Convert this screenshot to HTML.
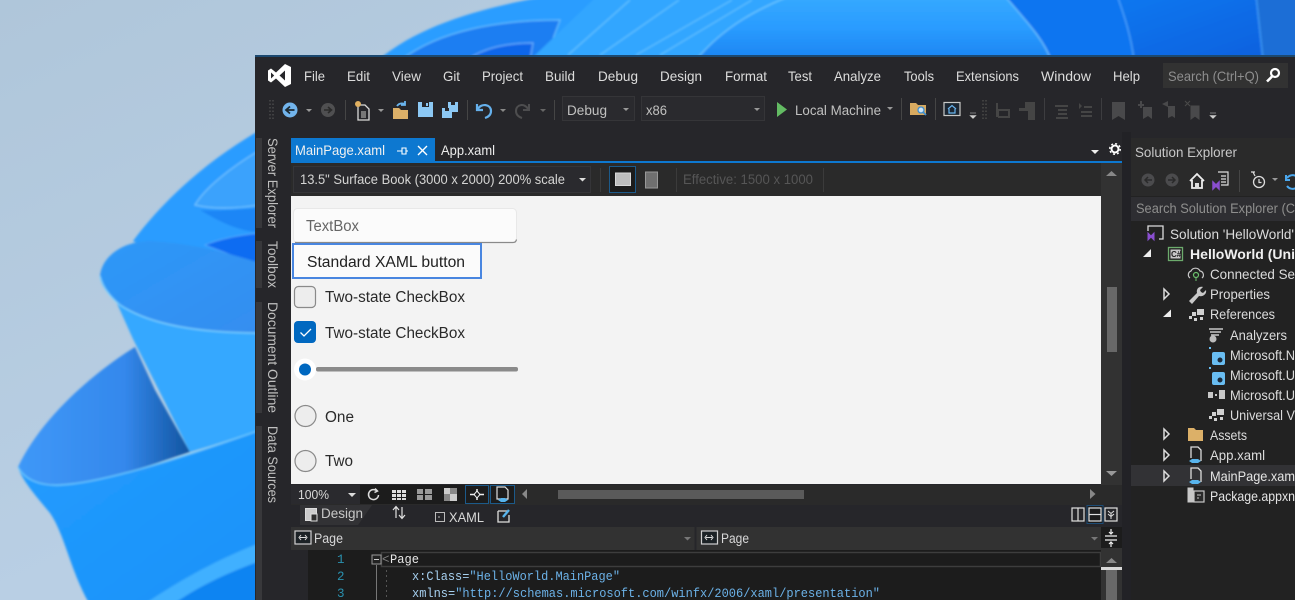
<!DOCTYPE html>
<html><head><meta charset="utf-8"><title>Visual Studio XAML Designer</title>
<style>
html,body{margin:0;padding:0;background:#b8cde0;width:1295px;height:600px;overflow:hidden}
svg{display:block}
text{font-family:"Liberation Sans",sans-serif;font-size:14px;fill:#e4e4e4;white-space:pre}
.m{fill:#dcdcdc}
.d{fill:#202020;font-size:15.5px}
.c{font-family:"Liberation Mono",monospace;font-size:12.5px;fill:#d8d8d8}
.n{fill:#2b91af}
.v{fill:#c0c0c0;font-size:13.5px}
</style></head><body>
<svg width="1295" height="600" viewBox="0 0 1295 600" xmlns="http://www.w3.org/2000/svg">
<defs>
<linearGradient id="bg" x1="0" y1="0" x2="1" y2="1"><stop offset="0" stop-color="#afc6da"/><stop offset=".5" stop-color="#b9cfe4"/><stop offset="1" stop-color="#bccfe6"/></linearGradient>
<linearGradient id="back" x1="0" y1="0" x2="1" y2="0"><stop offset="0" stop-color="#3f98f8"/><stop offset=".62" stop-color="#3488ec"/><stop offset=".85" stop-color="#1f68bd"/><stop offset="1" stop-color="#13549f"/></linearGradient>
<linearGradient id="front" x1="0" y1="0" x2="1" y2="1"><stop offset="0" stop-color="#229cff"/><stop offset="1" stop-color="#1c92f8"/></linearGradient>
<linearGradient id="dome" x1="0" y1="0" x2="0" y2="1"><stop offset="0" stop-color="#36aaff"/><stop offset=".5" stop-color="#2a9cff"/><stop offset="1" stop-color="#1b84f2"/></linearGradient>
<linearGradient id="dk" x1="0" y1="0" x2="1" y2="1"><stop offset="0" stop-color="#0e78f0"/><stop offset="1" stop-color="#0a5edc"/></linearGradient>
<linearGradient id="pt" x1="0" y1="0" x2="1" y2="1"><stop offset="0" stop-color="#2c98f8"/><stop offset="1" stop-color="#358ef0"/></linearGradient>
<clipPath id="se"><rect x="1131" y="138" width="164" height="462"/></clipPath>
<filter id="b1" x="-5%" y="-5%" width="110%" height="110%"><feGaussianBlur stdDeviation="1"/></filter>
<filter id="b2" x="0" y="0" width="100%" height="100%"><feGaussianBlur stdDeviation="0.35"/></filter>
</defs>

<!-- wallpaper -->
<rect width="1295" height="600" fill="url(#bg)"/>
<g filter="url(#b1)">
<path d="M378 60C420 25 480 8 553 -5H1300V60Z" fill="#2a9dff"/>
<path d="M401 60C440 30 500 20 560 20L545 60Z" fill="#1a7ef2" stroke="#6cc4ff" stroke-width="1"/>
<path d="M467 60C485 47 510 43 533 43L530 60Z" fill="#0e66ea" stroke="#70b8ff" stroke-width="1"/>
<path d="M530 60L598 -5H1300V60Z" fill="#33a6ff"/>
<g fill="none" stroke="#6cc8ff" stroke-width="1"><path d="M568 55L630 0M600 55L679 0M636 55L732 0M660 55L752 0"/></g>
<path d="M1004 -5H1300V60H1051Z" fill="#0e74f0"/>
<path d="M1117 -5C1125 18 1131 36 1134 60H1300V-5Z" fill="url(#dk)" stroke="#55b0ff" stroke-width="1"/>
<path d="M1256 -5L1263 60H1300V-5Z" fill="#1a6ed6" stroke="#4aa8ff" stroke-width="1"/>
<path d="M696 60C725 25 760 8 792 -5H1004C1025 20 1043 38 1051 60Z" fill="url(#dome)" stroke="#7ad0ff" stroke-width="1"/>

<path d="M260 130C200 165 160 205 133 241L260 300Z" fill="#2a9cff"/>
<path d="M260 150C230 168 205 188 195 205C215 210 240 208 260 205Z" fill="#3aa2fc" stroke="#7ccaff" stroke-width="1"/>
<path d="M200 210C220 222 240 232 260 232V208C235 210 215 211 200 210Z" fill="#1f86f6"/>
<path d="M205 245C222 238 240 235 260 233V266Z" fill="#0b6cf2" stroke="#66b8ff" stroke-width=".6"/>
<path d="M135 347C90 375 40 420 18 467C25 480 40 485 60 485C105 483 150 465 190 452L155 390Z" fill="url(#back)"/>
<path d="M115 299L133 339L190 452C215 445 235 438 260 430V333C200 333 150 320 115 299Z" fill="#34a8ff"/>
<path d="M100 276C102 255 125 241 150 241C190 243 225 252 260 263V333C200 333 150 325 120 305C108 295 100 285 100 276Z" fill="url(#pt)"/>
<path d="M100 276C102 285 108 295 120 305C150 325 200 333 260 333" fill="none" stroke="#7fd4ff" stroke-width="1.300"/>
<path d="M18 467C25 480 40 486 60 485C105 483 190 455 260 430V605H90C70 570 65 535 50 513C35 495 22 480 18 467Z" fill="url(#front)"/>
<path d="M18 467C25 480 40 486 60 485C105 483 190 455 260 430" fill="none" stroke="#6fceff" stroke-width="1.200"/>
<path d="M143 605C180 580 220 558 260 543V605Z" fill="#3fb0ff"/>
<path d="M172 605C200 585 230 572 260 561V605Z" fill="#0d84f2"/>
</g>

<g filter="url(#b2)">
<!-- window -->
<rect x="255" y="55" width="1040" height="545" fill="#28282a"/>
<rect x="255" y="55" width="1040" height="2" fill="#1c4a70"/>

<!-- logo -->
<path fill-rule="evenodd" fill="#fff" d="M285 64L291 67V84L285 87L276 78.500L271 82.500L268 80.500V70.500L271 68.500L276 72.500ZM271 72.500V78.500L274.200 75.500ZM285 70.500L279.500 75.500L285 80.500Z"/>

<!-- menu -->
<text class="m" x="304" y="81" textLength="21" lengthAdjust="spacingAndGlyphs">File</text>
<text class="m" x="347" y="81" textLength="23" lengthAdjust="spacingAndGlyphs">Edit</text>
<text class="m" x="392" y="81" textLength="29" lengthAdjust="spacingAndGlyphs">View</text>
<text class="m" x="443" y="81" textLength="17" lengthAdjust="spacingAndGlyphs">Git</text>
<text class="m" x="482" y="81" textLength="41" lengthAdjust="spacingAndGlyphs">Project</text>
<text class="m" x="545" y="81" textLength="30" lengthAdjust="spacingAndGlyphs">Build</text>
<text class="m" x="598" y="81" textLength="40" lengthAdjust="spacingAndGlyphs">Debug</text>
<text class="m" x="660" y="81" textLength="42" lengthAdjust="spacingAndGlyphs">Design</text>
<text class="m" x="725" y="81" textLength="42" lengthAdjust="spacingAndGlyphs">Format</text>
<text class="m" x="788" y="81" textLength="24" lengthAdjust="spacingAndGlyphs">Test</text>
<text class="m" x="834" y="81" textLength="47" lengthAdjust="spacingAndGlyphs">Analyze</text>
<text class="m" x="904" y="81" textLength="30" lengthAdjust="spacingAndGlyphs">Tools</text>
<text class="m" x="956" y="81" textLength="63" lengthAdjust="spacingAndGlyphs">Extensions</text>
<text class="m" x="1041" y="81" textLength="50" lengthAdjust="spacingAndGlyphs">Window</text>
<text class="m" x="1113" y="81" textLength="27" lengthAdjust="spacingAndGlyphs">Help</text>
<rect x="1163" y="63" width="125" height="25" fill="#303031"/>
<text x="1168" y="81" textLength="91" lengthAdjust="spacingAndGlyphs" style="fill:#8e8e8e">Search (Ctrl+Q)</text>
<circle cx="1275" cy="73" r="4" fill="none" stroke="#fff" stroke-width="2.200"/><path d="M1272 76.500L1267 81.500" stroke="#fff" stroke-width="2.600"/>

<!-- toolbar -->
<path d="M270 100v20M273 100v20" stroke="#4a4a4a" stroke-width="1.500" stroke-dasharray="1.500 2"/>
<circle cx="290" cy="110" r="7.500" fill="#72b4ec"/><path d="M294.500 110H287M290 106.500L286 110L290 113.500" fill="none" stroke="#1f2a33" stroke-width="1.800"/>
<path d="M306 109h6l-3 3z" fill="#999"/>
<circle cx="328" cy="110" r="7" fill="#505051"/><path d="M324 110h7M328 107l3.500 3l-3.500 3" fill="none" stroke="#2a2a2b" stroke-width="1.600"/>
<path d="M345.500 100v20" stroke="#444"/>
<path d="M358 105h7l4 4v11h-11z" fill="none" stroke="#d8d8d8" stroke-width="1.300"/><circle cx="358" cy="104" r="3" fill="#e0b060"/><path d="M361 111h5v7h-5z" fill="#777"/>
<path d="M378 109h6l-3 3z" fill="#999"/>
<path d="M393 108h6l2 2h7v9h-15z" fill="#dcb067"/><path d="M397 106c2-3 5-3 8-2M405 101v4h-4" fill="none" stroke="#6ab4ee" stroke-width="1.800"/>
<path d="M418 102h15v15h-15z" fill="#8cc8f4"/><path d="M422 102h7v5h-7z" fill="#28282a"/><rect x="426" y="103" width="2" height="3" fill="#8cc8f4"/>
<path d="M442 108h10v10h-10z" fill="#8cc8f4"/><path d="M448 102h10v10h-6v-4h-4z" fill="#8cc8f4"/><path d="M445 108h4v3h-4zM451 102h4v3h-4z" fill="#28282a"/>
<path d="M467.500 100v20" stroke="#444"/>
<path d="M477 104v6h6M478 109c3-6 13-5 13 2c0 4-3 6-6 7" fill="none" stroke="#65b0ec" stroke-width="2.200"/>
<path d="M500 109h6l-3 3z" fill="#888"/>
<path d="M529 104v6h-6M528 109c-3-6-12-5-12 2c0 4 3 6 6 7" fill="none" stroke="#4e4e4f" stroke-width="2"/>
<path d="M540 109h6l-3 3z" fill="#666"/>
<path d="M554.500 100v20" stroke="#444"/>
<rect x="562.500" y="96.500" width="72" height="24" fill="#2c2c2d" stroke="#363637"/>
<text class="v" x="567" y="115" textLength="40" lengthAdjust="spacingAndGlyphs">Debug</text>
<path d="M623 108h6l-3 3z" fill="#999"/>
<rect x="641.500" y="96.500" width="123" height="24" fill="#2c2c2d" stroke="#363637"/>
<text class="v" x="646" y="115" textLength="21" lengthAdjust="spacingAndGlyphs">x86</text>
<path d="M754 108h6l-3 3z" fill="#999"/>
<path d="M777 102L787 109.500L777 117Z" fill="#63bb63"/>
<text class="v" x="795" y="115" textLength="86" lengthAdjust="spacingAndGlyphs">Local Machine</text>
<path d="M887 107h6l-3 3z" fill="#999"/>
<path d="M901.500 98v22" stroke="#444"/>
<path d="M910 103h6l2 2h8v10h-16z" fill="#d8aa60"/><circle cx="921" cy="110" r="3" fill="#cfe6f8" stroke="#3f8fd0" stroke-width="1.300"/><path d="M923 112l3 3" stroke="#3f8fd0" stroke-width="1.800"/>
<path d="M935.500 98v22" stroke="#444"/>
<rect x="944" y="102.500" width="16" height="13" fill="#1c2833" stroke="#c8c8c8" stroke-width="1.200"/><path d="M948 109l4-3.500l4 3.500M949 109v4h6v-4" fill="none" stroke="#6ab4ee" stroke-width="1.200"/>
<path d="M970 113h6M970 115.500h6l-3 3z" fill="#ccc" stroke="#ccc" stroke-width=".6"/>
<path d="M983 100v20M986 100v20" stroke="#484848" stroke-width="1.500" stroke-dasharray="1.500 2"/>
<g fill="#444445"><path d="M996 103h2v6h12v9h-12v-1h-2zM999 111v5h9v-5z"/><path d="M1019 108h6v-6h10v18h-7v-9h-9z"/></g>
<path d="M1044.500 98v22M1101.500 98v22" stroke="#3e3e3f"/>
<path d="M1055 105h13v2h-13zM1058 109h9v2h-9zM1058 113h9v2h-9zM1056 117h12v2h-12z" fill="#444445"/>
<path d="M1079 103l3 3l-3 3M1084 106h8v2h-8zM1081 111h11v2h-11zM1081 115h11v2h-11z" fill="#444445"/>
<path d="M1112 102h13v18l-6.500-4l-6.500 4z" fill="#4a4a4b"/>
<path d="M1143 107h9v12l-4-3l-5 3zM1138 104h6v2h-6zM1140 101h2v7h-2z" fill="#4a4a4b"/>
<path d="M1168 106h7v12l-3-2l-4 2zM1162 104l6-3v6z" fill="#4a4a4b"/>
<path d="M1191 106h8v13l-4-3l-4 3zM1185 101l5 5M1190 101l-5 5" fill="#4a4a4b" stroke="#4a4a4b"/>
<path d="M1210 113h6M1210 115.500h6l-3 3z" fill="#ccc" stroke="#ccc" stroke-width=".6"/>

<!-- left strip -->
<rect x="255" y="132" width="36" height="468" fill="#28282a"/>
<rect x="256" y="138" width="6" height="90" fill="#38383a"/>
<rect x="256" y="241" width="6" height="47" fill="#38383a"/>
<rect x="256" y="302" width="6" height="111" fill="#38383a"/>
<rect x="256" y="426" width="6" height="174" fill="#38383a"/>
<text transform="translate(268,138) rotate(90)" textLength="90" lengthAdjust="spacingAndGlyphs" style="font-size:13.5px;fill:#c0c0c0">Server Explorer</text>
<text transform="translate(268,241) rotate(90)" textLength="47" lengthAdjust="spacingAndGlyphs" style="font-size:13.5px;fill:#c0c0c0">Toolbox</text>
<text transform="translate(268,302) rotate(90)" textLength="111" lengthAdjust="spacingAndGlyphs" style="font-size:13.5px;fill:#c0c0c0">Document Outline</text>
<text transform="translate(268,426) rotate(90)" textLength="77" lengthAdjust="spacingAndGlyphs" style="font-size:13.5px;fill:#c0c0c0">Data Sources</text>

<!-- tabs -->
<rect x="291" y="138" width="144" height="23" fill="#0a78d0"/>
<rect x="291" y="161" width="831" height="2" fill="#0a78d0"/>
<text x="295" y="155" textLength="90" lengthAdjust="spacingAndGlyphs" style="fill:#f0f0f0">MainPage.xaml</text>
<path d="M397 151h5M402 148v6h4v-6zM406 151h2" fill="none" stroke="#fff" stroke-width="1.100"/>
<path d="M418 146l9 9M427 146l-9 9" stroke="#fff" stroke-width="1.400"/>
<text x="441" y="155" textLength="54" lengthAdjust="spacingAndGlyphs" style="fill:#ececec">App.xaml</text>
<path d="M1091 150h8l-4 4z" fill="#eee"/>
<circle cx="1115" cy="149" r="3.500" fill="none" stroke="#fff" stroke-width="2"/><circle cx="1115" cy="149" r="5.300" fill="none" stroke="#fff" stroke-width="1.400" stroke-dasharray="2 2.160"/>

<!-- device bar -->
<rect x="291" y="163" width="810" height="33" fill="#29292a"/>
<rect x="293.500" y="166.500" width="297" height="26" fill="#2c2c2d" stroke="#363637"/>
<text x="300" y="184" textLength="265" lengthAdjust="spacingAndGlyphs" style="font-size:13.5px;fill:#d4d4d4">13.5" Surface Book (3000 x 2000) 200% scale</text>
<path d="M579 178h7l-3.500 3.500z" fill="#ddd"/>
<path d="M600.500 168v24" stroke="#3a3a3b"/>
<rect x="609.500" y="166.500" width="26" height="26" fill="#1a1c1e" stroke="#1c5a8a"/>
<rect x="615.500" y="173" width="15" height="12.500" fill="#bdbdbd" stroke="#d8d8d8"/>
<rect x="645.500" y="172" width="12" height="16" fill="#707070" stroke="#999"/>
<path d="M676.500 168v24M823.500 168v24" stroke="#3a3a3b"/>
<text x="683" y="184" textLength="130" lengthAdjust="spacingAndGlyphs" style="font-size:13.5px;fill:#565656">Effective: 1500 x 1000</text>

<!-- design surface -->
<rect x="291" y="196" width="810" height="288" fill="#f3f3f3"/>
<rect x="293.500" y="208.500" width="223" height="34" rx="4" fill="#fbfbfb" stroke="#e8e8e8"/>
<path d="M295 242.500H513q3 0 3.500-3" fill="none" stroke="#8a8a8a" stroke-width="1.200"/>
<text class="d" x="306" y="231" textLength="53" lengthAdjust="spacingAndGlyphs" style="fill:#666">TextBox</text>
<rect x="293" y="244" width="188" height="34" fill="#fbfbfb" stroke="#4a86e0" stroke-width="2"/>
<text class="d" x="307" y="267" textLength="158" lengthAdjust="spacingAndGlyphs">Standard XAML button</text>
<rect x="294.500" y="286.500" width="21" height="21" rx="4" fill="#ededed" stroke="#8a8a8a" stroke-width="1.200"/>
<text class="d" x="325" y="302" textLength="140" lengthAdjust="spacingAndGlyphs" style="fill:#2a2a2a">Two-state CheckBox</text>
<rect x="294" y="321" width="22" height="22" rx="4" fill="#0067c0"/>
<path d="M300.500 332.500l3.500 3.500l7-7" fill="none" stroke="#fff" stroke-width="1.300"/>
<text class="d" x="325" y="338" textLength="140" lengthAdjust="spacingAndGlyphs" style="fill:#2a2a2a">Two-state CheckBox</text>
<rect x="316" y="367" width="202" height="4.500" rx="2" fill="#8a8a8a"/>
<circle cx="305" cy="369.500" r="11" fill="#fff"/><circle cx="305" cy="369.500" r="6" fill="#0067c0"/>
<circle cx="305.500" cy="416" r="10.500" fill="#ededed" stroke="#8a8a8a" stroke-width="1.200"/>
<text class="d" x="325" y="422" textLength="29" lengthAdjust="spacingAndGlyphs" style="fill:#2a2a2a">One</text>
<circle cx="305.500" cy="461" r="10.500" fill="#ededed" stroke="#8a8a8a" stroke-width="1.200"/>
<text class="d" x="325" y="466" textLength="28" lengthAdjust="spacingAndGlyphs" style="fill:#2a2a2a">Two</text>

<!-- v scroll -->
<rect x="1101" y="163" width="21" height="342" fill="#313133"/>
<rect x="1107" y="287" width="10" height="65" fill="#686868"/>
<path d="M1106 176l5.500-5l5.500 5z" fill="#888"/><path d="M1106 471h11l-5.500 5z" fill="#999"/>

<!-- bottom designer bar -->
<rect x="291" y="485" width="831" height="20" fill="#29292a"/>
<rect x="291" y="485" width="69" height="19" fill="#2c2c2d"/>
<text x="298" y="499" textLength="31" lengthAdjust="spacingAndGlyphs" style="font-size:13px;fill:#d8d8d8">100%</text>
<path d="M348 493h8l-4 4z" fill="#ddd"/>
<rect x="360" y="485" width="106" height="19" fill="#1f1f1f"/>
<path d="M377 491a5 5 0 1 0 1.500 4M375 488.500l2.500 2.500l-3 1.500" fill="none" stroke="#ddd" stroke-width="1.500"/>
<path fill="#ddd" d="M392 490h4v3h-4zM397 490h4v3h-4zM402 490h4v3h-4zM392 494h4v3h-4zM397 494h4v3h-4zM402 494h4v3h-4zM392 498h4v2h-4zM397 498h4v2h-4zM402 498h4v2h-4z"/>
<path fill="#999" d="M417 489h6v5h-6zM425 489h7v5h-7zM417 495h6v5h-6zM425 495h7v5h-7z"/>
<path d="M444 488h13v13h-13z" fill="#888"/><path d="M444 488h6v6h-6zM450 494h7v7h-7z" fill="#ccc"/>
<rect x="465.500" y="485.500" width="23" height="18" fill="#1b1d1f" stroke="#1c5a8a"/>
<path d="M470 494.500h5M479 494.500h5M477 489v3M477 497v3" stroke="#eee" stroke-width="1.500"/><path d="M477 491l3 3.500l-3 3.500l-3-3.500z" fill="none" stroke="#eee"/>
<rect x="490.500" y="485.500" width="24" height="18" fill="#1b1d1f" stroke="#1c5a8a"/>
<path d="M497 487h8l3 3v9h-11z" fill="none" stroke="#ddd" stroke-width="1.200"/><path d="M498 500l3-2h4l3 2l-3 2h-4z" fill="#59b4ec"/>
<path d="M527 489v10l-5-5z" fill="#888"/>
<rect x="558" y="490" width="246" height="9" fill="#5a5a5a"/>
<path d="M1090 489l5.500 5l-5.500 5z" fill="#888"/>

<!-- design/xaml row -->
<rect x="291" y="505" width="831" height="22" fill="#28282a"/>
<path d="M300 505H372L358 525H300Z" fill="#333335"/>
<rect x="305.500" y="508.500" width="11" height="12" fill="#ccc" stroke="#ddd"/><rect x="311" y="514" width="6" height="7" fill="#2f2f2f" stroke="#ddd"/>
<text x="321" y="518" textLength="42" lengthAdjust="spacingAndGlyphs" style="font-size:13.5px;fill:#c8c8c8">Design</text>
<path d="M396 518v-11M393 510l3-3.500l3 3.500M402 507v11M399 515l3 3.500l3-3.500" fill="none" stroke="#e0e0e0" stroke-width="1.200"/>
<rect x="435.500" y="512.500" width="9" height="9" fill="none" stroke="#bbb"/><path d="M439 516v2" stroke="#bbb"/>
<text x="449" y="522" textLength="35" lengthAdjust="spacingAndGlyphs" style="font-size:13.5px;fill:#d8d8d8">XAML</text>
<path d="M498 511h9M498 511v11h11v-7" fill="none" stroke="#ddd" stroke-width="1.300"/><path d="M503 517l6-7" stroke="#59b4ec" stroke-width="2.400"/>
<rect x="1072" y="508" width="12" height="13" fill="none" stroke="#e0e0e0" stroke-width="1.200"/><path d="M1078 508v13" stroke="#e0e0e0" stroke-width="1.200"/>
<rect x="1087" y="505.500" width="16" height="18" fill="#1a1c1f" stroke="#1a4c74"/>
<rect x="1089" y="508" width="12" height="13" fill="none" stroke="#e0e0e0" stroke-width="1.200"/><path d="M1089 514.500h12" stroke="#e0e0e0" stroke-width="1.200"/>
<rect x="1105" y="508" width="12" height="13" fill="none" stroke="#e0e0e0" stroke-width="1.200"/><path d="M1108 511l3 2.500l3-2.500M1108 514l3 2.500l3-2.500M1111 514v5" fill="none" stroke="#e0e0e0"/>

<!-- nav bar -->
<rect x="291" y="527" width="831" height="23" fill="#313133"/>
<path d="M695.500 527v23" stroke="#28282a" stroke-width="2"/>
<rect x="295" y="531" width="16" height="13" fill="#1f2226" stroke="#d0d0d0" stroke-width="1.200"/><path d="M300 537.500h6M301 535l-2 2.500l2 2.500M305 535l2 2.500l-2 2.500" fill="none" stroke="#ddd"/>
<text x="314" y="543" textLength="29" lengthAdjust="spacingAndGlyphs" style="font-size:13.5px;fill:#d8d8d8">Page</text>
<path d="M684 537h7l-3.500 3.500z" fill="#777"/>
<rect x="701.500" y="531" width="16" height="13" fill="#1f2226" stroke="#d0d0d0" stroke-width="1.200"/><path d="M706 537.500h6M707 535l-2 2.500l2 2.500M711 535l2 2.500l-2 2.500" fill="none" stroke="#ddd"/>
<text x="721" y="543" textLength="28" lengthAdjust="spacingAndGlyphs" style="font-size:13.5px;fill:#d8d8d8">Page</text>
<path d="M1091 537h7l-3.500 3.500z" fill="#777"/>
<rect x="1101" y="527" width="21" height="21" fill="#1e1e1f"/>
<path d="M1105 536h12M1105 540h12M1111 529v5M1109 532l2 2l2-2M1111 547v-5M1109 544l2-2l2 2" fill="none" stroke="#eee" stroke-width="1.200"/>

<!-- editor -->
<rect x="291" y="550" width="810" height="50" fill="#1b1b1b"/>
<rect x="291" y="550" width="17" height="50" fill="#28282a"/>
<rect x="381.500" y="552.500" width="719" height="14" fill="#1a1a1a" stroke="#3d3d3d" stroke-width="1.500"/>
<rect x="372" y="555" width="9" height="9" fill="#222" stroke="#999"/><path d="M374 559.500h5" stroke="#ccc"/>
<path d="M376.500 565V600" stroke="#777"/><path d="M386.500 570V600" stroke="#555" stroke-dasharray="2 3"/>
<text class="c n" x="337" y="563">1</text><text class="c n" x="337" y="580">2</text><text class="c n" x="337" y="597">3</text>
<text class="c" x="382" y="563" style="fill:#808080">&lt;</text>
<text class="c" x="390" y="563" textLength="29" lengthAdjust="spacingAndGlyphs" style="fill:#e8e8e8">Page</text>
<text class="c" x="412" y="580" textLength="208" lengthAdjust="spacingAndGlyphs" style="fill:#a6d0f0">x:Class=<tspan style="fill:#6cb2e8">"HelloWorld.MainPage"</tspan></text>
<text class="c" x="412" y="597" textLength="468" lengthAdjust="spacingAndGlyphs" style="fill:#a6d0f0">xmlns=<tspan style="fill:#6cb2e8">"http://schemas.microsoft.com/winfx/2006/xaml/presentation"</tspan></text>
<rect x="1101" y="550" width="21" height="50" fill="#313133"/>
<path d="M1106 563l5.500-5l5.500 5z" fill="#888"/>
<rect x="1101" y="567" width="21" height="3" fill="#d8d8d8"/>
<rect x="1106" y="570" width="11" height="30" fill="#686868"/>

<!-- gap -->
<rect x="1122" y="132" width="9" height="468" fill="#242425"/>

<!-- solution explorer -->
<g clip-path="url(#se)">
<rect x="1131" y="138" width="164" height="462" fill="#212122"/>
<rect x="1131" y="138" width="164" height="58" fill="#29292a"/>
<text x="1135" y="157" textLength="102" lengthAdjust="spacingAndGlyphs" style="fill:#c8c8c8">Solution Explorer</text>
<circle cx="1148" cy="180" r="6.500" fill="#4c4c4d"/><path d="M1152 180h-7M1148 177l-3 3l3 3" fill="none" stroke="#2b2b2c" stroke-width="1.500"/>
<circle cx="1172" cy="180" r="6.500" fill="#4c4c4d"/><path d="M1168 180h7M1172 177l3 3l-3 3" fill="none" stroke="#2b2b2c" stroke-width="1.500"/>
<path d="M1190 181l7-7l7 7M1192 180v8h10v-8" fill="none" stroke="#eee" stroke-width="1.800"/><rect x="1195" y="183" width="4" height="5" fill="#ddd"/>
<path d="M1213 182l3 3l3-3v7l-3-3l-3 3z" fill="#8a4fd0" stroke="#8a4fd0" stroke-width="1.500"/><path d="M1218 172h10v13h-7M1221 176h5M1221 179h5M1221 182h5" fill="none" stroke="#ddd" stroke-width="1.200"/>
<path d="M1239.500 170v22" stroke="#444"/>
<circle cx="1259" cy="182" r="5.500" fill="none" stroke="#ddd" stroke-width="1.300"/><path d="M1259 179v3.500h2.500M1251 172h4M1253 172l2 4" fill="none" stroke="#ddd" stroke-width="1.200"/>
<path d="M1272 178h6l-3 3z" fill="#999"/>
<path d="M1287 178a7 7 0 0 1 9-2M1287 186a7 7 0 0 0 9 2M1286 175v5h4" fill="none" stroke="#4ba8ee" stroke-width="2"/>
<rect x="1131" y="197" width="164" height="24" fill="#2f2f30"/>
<text x="1136" y="213" textLength="159" lengthAdjust="spacingAndGlyphs" style="font-size:13.5px;fill:#8e8e8e">Search Solution Explorer (C</text>

<rect x="1131" y="465" width="164" height="21" fill="#333334"/>

<text x="1170" y="239" textLength="124" lengthAdjust="spacingAndGlyphs" style="fill:#dcdcdc">Solution 'HelloWorld'</text>
<text x="1190" y="259" textLength="105" lengthAdjust="spacingAndGlyphs" style="fill:#f0f0f0;font-weight:bold">HelloWorld (Uni</text>
<text x="1210" y="279" textLength="85" lengthAdjust="spacingAndGlyphs" style="fill:#dcdcdc">Connected Se</text>
<text x="1210" y="299" textLength="60" lengthAdjust="spacingAndGlyphs" style="fill:#dcdcdc">Properties</text>
<text x="1210" y="319" textLength="65" lengthAdjust="spacingAndGlyphs" style="fill:#dcdcdc">References</text>
<text x="1230" y="340" textLength="57" lengthAdjust="spacingAndGlyphs" style="fill:#dcdcdc">Analyzers</text>
<text x="1230" y="360" textLength="65" lengthAdjust="spacingAndGlyphs" style="fill:#dcdcdc">Microsoft.N</text>
<text x="1230" y="380" textLength="65" lengthAdjust="spacingAndGlyphs" style="fill:#dcdcdc">Microsoft.U</text>
<text x="1230" y="400" textLength="65" lengthAdjust="spacingAndGlyphs" style="fill:#dcdcdc">Microsoft.U</text>
<text x="1230" y="420" textLength="65" lengthAdjust="spacingAndGlyphs" style="fill:#dcdcdc">Universal V</text>
<text x="1210" y="440" textLength="37" lengthAdjust="spacingAndGlyphs" style="fill:#dcdcdc">Assets</text>
<text x="1210" y="460" textLength="55" lengthAdjust="spacingAndGlyphs" style="fill:#dcdcdc">App.xaml</text>
<text x="1210" y="481" textLength="85" lengthAdjust="spacingAndGlyphs" style="fill:#e4e4e4">MainPage.xam</text>
<text x="1210" y="501" textLength="85" lengthAdjust="spacingAndGlyphs" style="fill:#e4e4e4">Package.appxn</text>

<!-- tree icons -->
<path d="M1148 231v-5h15v13h-4" fill="none" stroke="#ddd" stroke-width="1.300"/><path d="M1148 233l3 3l3-3v7l-3-3l-3 3z" fill="#8a4fd0" stroke="#8a4fd0"/>
<path d="M1143 257l8-8v8z" fill="#eee"/>
<rect x="1168.500" y="247.500" width="14" height="13" fill="#222" stroke="#6cab6c" stroke-width="1.300"/><rect x="1170.500" y="249.500" width="10" height="9" fill="#c8c8c8"/>
<text x="1171" y="257" style="font-size:8px;font-weight:bold;fill:#222">C#</text>
<path d="M1190 278a4 4 0 0 1 1-7a5 5 0 0 1 9 0a4 4 0 0 1 2 7" fill="none" stroke="#c8c8c8" stroke-width="1.200"/><circle cx="1196" cy="275" r="2.500" fill="none" stroke="#6cc06c" stroke-width="1.200"/><path d="M1196 278v3" stroke="#6cc06c"/>
<path d="M1164 289l5 5l-5 5z" fill="none" stroke="#ddd" stroke-width="1.500"/>
<path d="M1189 301l8-8c-1-4 2-7 6-6l-3 3l1 2l2 1l3-3c1 4-3 7-7 6l-7 8z" fill="#c8c8c8"/>
<path d="M1163 317l8-7.500v7.500z" fill="#eee"/>
<path fill="#d0d0d0" d="M1197 309h7v6h-7zM1192 312h4v4h-4zM1189 316h3v3h-3zM1194 318h3v3h-3zM1200 317h3v3h-3z"/>
<path d="M1209 329h14M1210 332h11M1211 335h8" stroke="#c8c8c8" stroke-width="1.500"/><circle cx="1213" cy="339" r="3.500" fill="#bbb"/>
<rect x="1212" y="352" width="13" height="13" rx="2" fill="#69bdf2"/><circle cx="1220" cy="360" r="2.500" fill="#1a2a3a"/><rect x="1209" y="347" width="2" height="2" fill="#69bdf2"/>
<rect x="1212" y="372" width="13" height="13" rx="2" fill="#69bdf2"/><circle cx="1220" cy="380" r="2.500" fill="#1a2a3a"/><rect x="1209" y="367" width="2" height="2" fill="#69bdf2"/>
<path d="M1208 392h5v6h-5zM1215 394h2v2h-2zM1219 390h6v9h-6z" fill="#c8c8c8"/>
<path fill="#d0d0d0" d="M1217 409h7v6h-7zM1212 412h4v4h-4zM1209 416h3v3h-3zM1214 418h3v3h-3zM1220 417h3v3h-3z"/>
<path d="M1164 429l5 5l-5 5z" fill="none" stroke="#ddd" stroke-width="1.500"/>
<path d="M1188 428h6l2 2h7v11h-15z" fill="#dcb067"/>
<path d="M1164 450l5 5l-5 5z" fill="none" stroke="#ddd" stroke-width="1.500"/>
<path d="M1191 458v-11h7l3 3v11" fill="none" stroke="#ddd" stroke-width="1.300"/><path d="M1189 461l3-2h6l3 2l-3 2h-6z" fill="#59b4ec"/>
<path d="M1164 471l5 5l-5 5z" fill="none" stroke="#ddd" stroke-width="1.500"/>
<path d="M1191 479v-11h7l3 3v11" fill="none" stroke="#ddd" stroke-width="1.300"/><path d="M1189 482l3-2h6l3 2l-3 2h-6z" fill="#59b4ec"/>
<rect x="1194" y="491" width="10" height="11" fill="#2a2a2a" stroke="#c8c8c8" stroke-width="1.200"/><path d="M1188 488h5v14h-5zM1197 495h4M1197 498h2" fill="#c8c8c8" stroke="#c8c8c8"/>
</g>
</g>
</svg>
</body></html>
